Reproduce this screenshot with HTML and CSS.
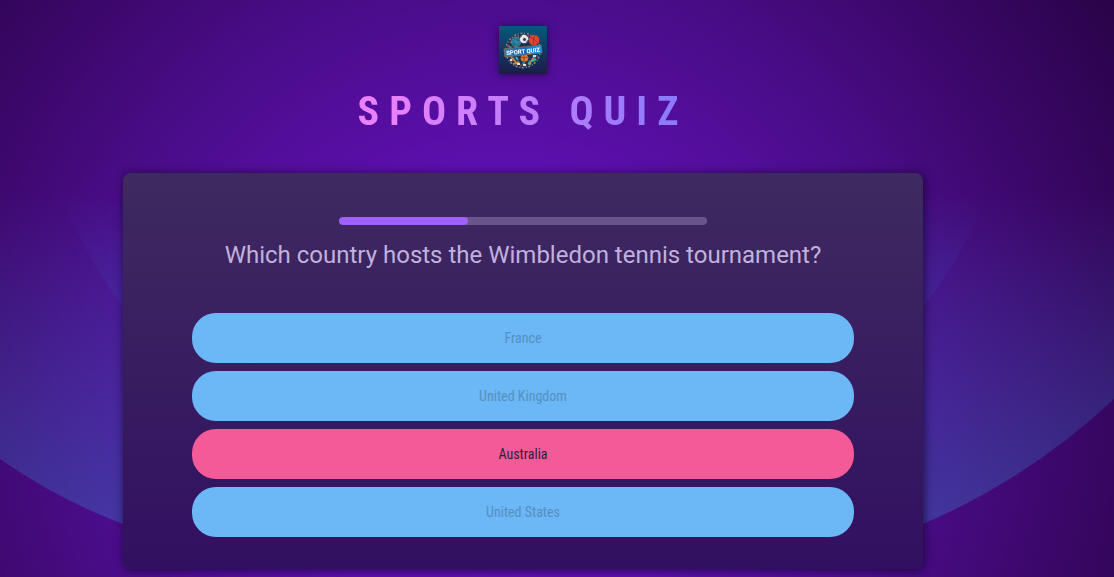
FILE: index.html
```html
<!DOCTYPE html>
<html lang="en">
<head>
<meta charset="utf-8">
<meta name="viewport" content="width=device-width, initial-scale=1">
<title>Sports Quiz</title>
<link rel="stylesheet" href="styles.css">
</head>
<body>
<svg class="backdrop" viewBox="0 0 1114 577" preserveAspectRatio="none" aria-hidden="true">
  <defs>
    <linearGradient id="outer" gradientUnits="userSpaceOnUse" x1="0" y1="190" x2="0" y2="590">
      <stop offset="0" stop-color="#3880cc" stop-opacity="0"/>
      <stop offset="1" stop-color="#3880cc" stop-opacity=".43"/>
    </linearGradient>
    <linearGradient id="inner" gradientUnits="userSpaceOnUse" x1="0" y1="195" x2="0" y2="420">
      <stop offset="0" stop-color="#3c50c0" stop-opacity="0"/>
      <stop offset="1" stop-color="#3c50c0" stop-opacity=".36"/>
    </linearGradient>
  </defs>
  <path fill="url(#outer)" d="M0 190V459Q59 500 123 524Q323 564 523 564Q723 564 923 524Q1030 478 1114 399V190Z"/>
  <path fill="url(#inner)" d="M62 195Q82 251 123 307Q290 520 523 520Q756 520 923 307Q967 250 986 195Z"/>
</svg>
<header class="header">
  <svg class="logo" viewBox="0 0 48 48" role="img" aria-label="Sport Quiz logo">
    <defs>
      <linearGradient id="tile" x1="0" y1="0" x2="0" y2="1">
        <stop offset="0" stop-color="#08577c"/>
        <stop offset="1" stop-color="#1b1c48"/>
      </linearGradient>
      <linearGradient id="ribbon" x1="0" y1="0" x2="1" y2="0">
        <stop offset="0" stop-color="#277fc4"/>
        <stop offset=".5" stop-color="#1766bd"/>
        <stop offset="1" stop-color="#1d9be0"/>
      </linearGradient>
    </defs>
    <rect width="48" height="48" fill="url(#tile)"/>
    <circle cx="24" cy="24.500" r="17.500" fill="#20324f"/>
    <circle cx="24" cy="24.500" r="17.200" fill="none" stroke="#7f8f90" stroke-width="1.500" stroke-dasharray="2 1.500 1 2"/>
    <circle cx="24" cy="24.500" r="15" fill="none" stroke="#b85b35" stroke-width="2" stroke-dasharray="2 3 1 4"/>
    <circle cx="24" cy="24.500" r="13" fill="none" stroke="#238db0" stroke-width="2.500" stroke-dasharray="2 4 3 3"/>
    <ellipse cx="17" cy="16" rx="4.500" ry="5" fill="#176d91" stroke="#5f7a86"/>
    <path d="M14 13l6 6M17 11v10M13 16h8" stroke="#4da3b5" stroke-width=".6"/>
    <circle cx="25" cy="13" r="4.200" fill="#e4e7ec"/>
    <path d="M25 12l2 1-1 2-2-1zM21 12l2-2M27 16l2-2" fill="#283249" stroke="#283249" stroke-width=".5"/>
    <circle cx="35" cy="14" r="5.300" fill="#dc4630"/>
    <path d="M31 11q5 2 8 6M36 9q-3 5-1 10" fill="none" stroke="#792a30" stroke-width=".6"/>
    <circle cx="25.500" cy="32" r="3.800" fill="#e5792f"/>
    <path d="M22 31q4 2 7 0M25 28v8" fill="none" stroke="#803725" stroke-width=".7"/>
    <path d="M12 31l5 5M34 32l-4 7M14 38l6-2" stroke="#d89140" stroke-width="1.500"/>
    <path d="M17 31l2 3M29 37l3 1M33 35l4-2" stroke="#37b6a1" stroke-width="2"/>
    <path d="M18 38h3M24 39h3M11 34h2M34 30h3" stroke="#dadde0" stroke-width="1.800"/>
    <path d="M5 23l37-4 1 8-37 4z" fill="url(#ribbon)" stroke="#8c6c5a" stroke-width=".8"/>
    <text class="logo-text" x="24" y="27.500" transform="rotate(-6 24 25)" text-anchor="middle">SPORT QUIZ</text>
  </svg>
  <h1 class="title">SPORTS QUIZ</h1>
</header>
<main class="quiz">
  <progress class="timer" max="100" value="35" aria-label="Time elapsed"></progress>
  <h2 class="question">Which country hosts the Wimbledon tennis tournament?</h2>
  <ul class="answers">
    <li><button class="answer" type="button" disabled>France</button></li>
    <li><button class="answer" type="button" disabled>United Kingdom</button></li>
    <li><button class="answer answer-wrong" type="button" disabled>Australia</button></li>
    <li><button class="answer" type="button" disabled>United States</button></li>
  </ul>
</main>
</body>
</html>
```
FILE: styles.css
```css
* {
  box-sizing: border-box;
}

html {
  min-height: 100%;
  background: #37065f;
}

body {
  position: relative;
  isolation: isolate;
  min-height: 100vh;
  margin: 0;
  padding: 26px 68px 8px 0;
  overflow-x: hidden;
  font-family: Roboto, "Liberation Sans", sans-serif;
  background: radial-gradient(circle at 45% 69%, #650fc0 0, #5c0fae 230px, #4c0d8d 400px, #3b0769 570px, #280346 740px);
}

.backdrop {
  position: absolute;
  inset: 0;
  z-index: -1;
  width: 100%;
  height: 100%;
}

.header {
  display: flex;
  flex-direction: column;
  align-items: center;
  gap: 14px;
  margin-bottom: 38px;
}

.logo {
  width: 48px;
  height: 48px;
  filter: drop-shadow(0 0 4px rgba(20, 4, 50, 0.7));
}

.logo-text {
  font: 700 6px Roboto, "Liberation Sans", sans-serif;
  fill: #ffffff;
}

.title {
  margin: 0;
  font: 700 40px/47px "Roboto Condensed", Roboto, sans-serif;
  letter-spacing: 10px;
  color: transparent;
  background: linear-gradient(90deg, #ea80fc 10%, #8c7afc 95%);
  -webkit-background-clip: text;
  background-clip: text;
}

.quiz {
  width: 100%;
  max-width: 800px;
  margin: 0 auto;
  padding: 44px 32px 32px;
  text-align: center;
  border-radius: 8px;
  background: linear-gradient(180deg, #3e2a60 0%, #321061 100%);
  box-shadow: 1px 1px 8px 1px rgba(12, 5, 32, 0.6);
}

.timer {
  display: block;
  width: 50%;
  height: 8px;
  margin: 0 auto;
  overflow: hidden;
  appearance: none;
  border: 0;
  border-radius: 4px;
  background: #6a558a;
}

.timer::-webkit-progress-bar {
  background: #6a558a;
}

.timer::-webkit-progress-value {
  border-radius: 4px;
  background: #a05fff;
}

.question {
  margin: 16px 0 44px;
  font-size: 24px;
  font-weight: 400;
  line-height: 28px;
  color: #c1b2dd;
}

.answers {
  display: grid;
  gap: 8px;
  width: 90%;
  margin: 0 auto;
  padding: 0;
  list-style: none;
}

.answer {
  display: block;
  width: 100%;
  padding: 16px 32px;
  font: 400 14px/18px "Roboto Condensed", Roboto, sans-serif;
  color: #5490c2;
  border: 0;
  border-radius: 24px;
  background: #6cb7f5;
}

.answer-wrong {
  color: #2c203d;
  background: #f55a98;
}
```
